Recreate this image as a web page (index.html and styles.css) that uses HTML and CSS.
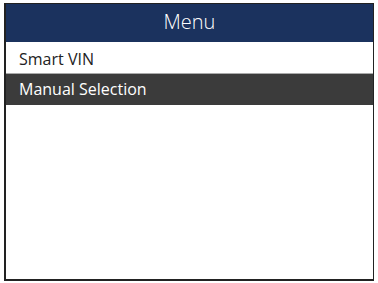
FILE: index.html
```html
<!DOCTYPE html>
<html lang="en">
<head>
  <meta charset="UTF-8">
  <title>Menu</title>
  <link rel="stylesheet" href="styles.css">
</head>
<body>
  <div class="screen">
    <div class="title">Menu</div>
    <ul class="menu">
      <li>Smart VIN</li>
      <li class="selected">Manual Selection</li>
    </ul>
  </div>
</body>
</html>
```

FILE: styles.css
```css
body {
  margin: 0;
  background-color: #fff;
  font-family: "Open Sans", Lato, sans-serif;
}
.screen {
  margin: 3px 0 0 4px;
  width: 370px;
  height: 278px;
  border: 2px solid #222;
  border-right-width: 1px;
  border-top-width: 1px;
  background-color: #fff;
  box-sizing: border-box;
}
.title {
  height: 38px;
  line-height: 36px;
  background-color: #1b325e;
  color: #fff;
  text-align: center;
  font-size: 20px;
  font-weight: 300;
}
.menu {
  list-style: none;
  margin: 0;
  padding: 0;
}
.menu li {
  height: 31px;
  line-height: 34px;
  padding-left: 13px;
  font-size: 16px;
  color: #222;
  border-bottom: 1px solid #aaa;
}
.menu li.selected {
  background-color: #3b3b3b;
  color: #fff;
  border-bottom: none;
  line-height: 30px;
}
```
